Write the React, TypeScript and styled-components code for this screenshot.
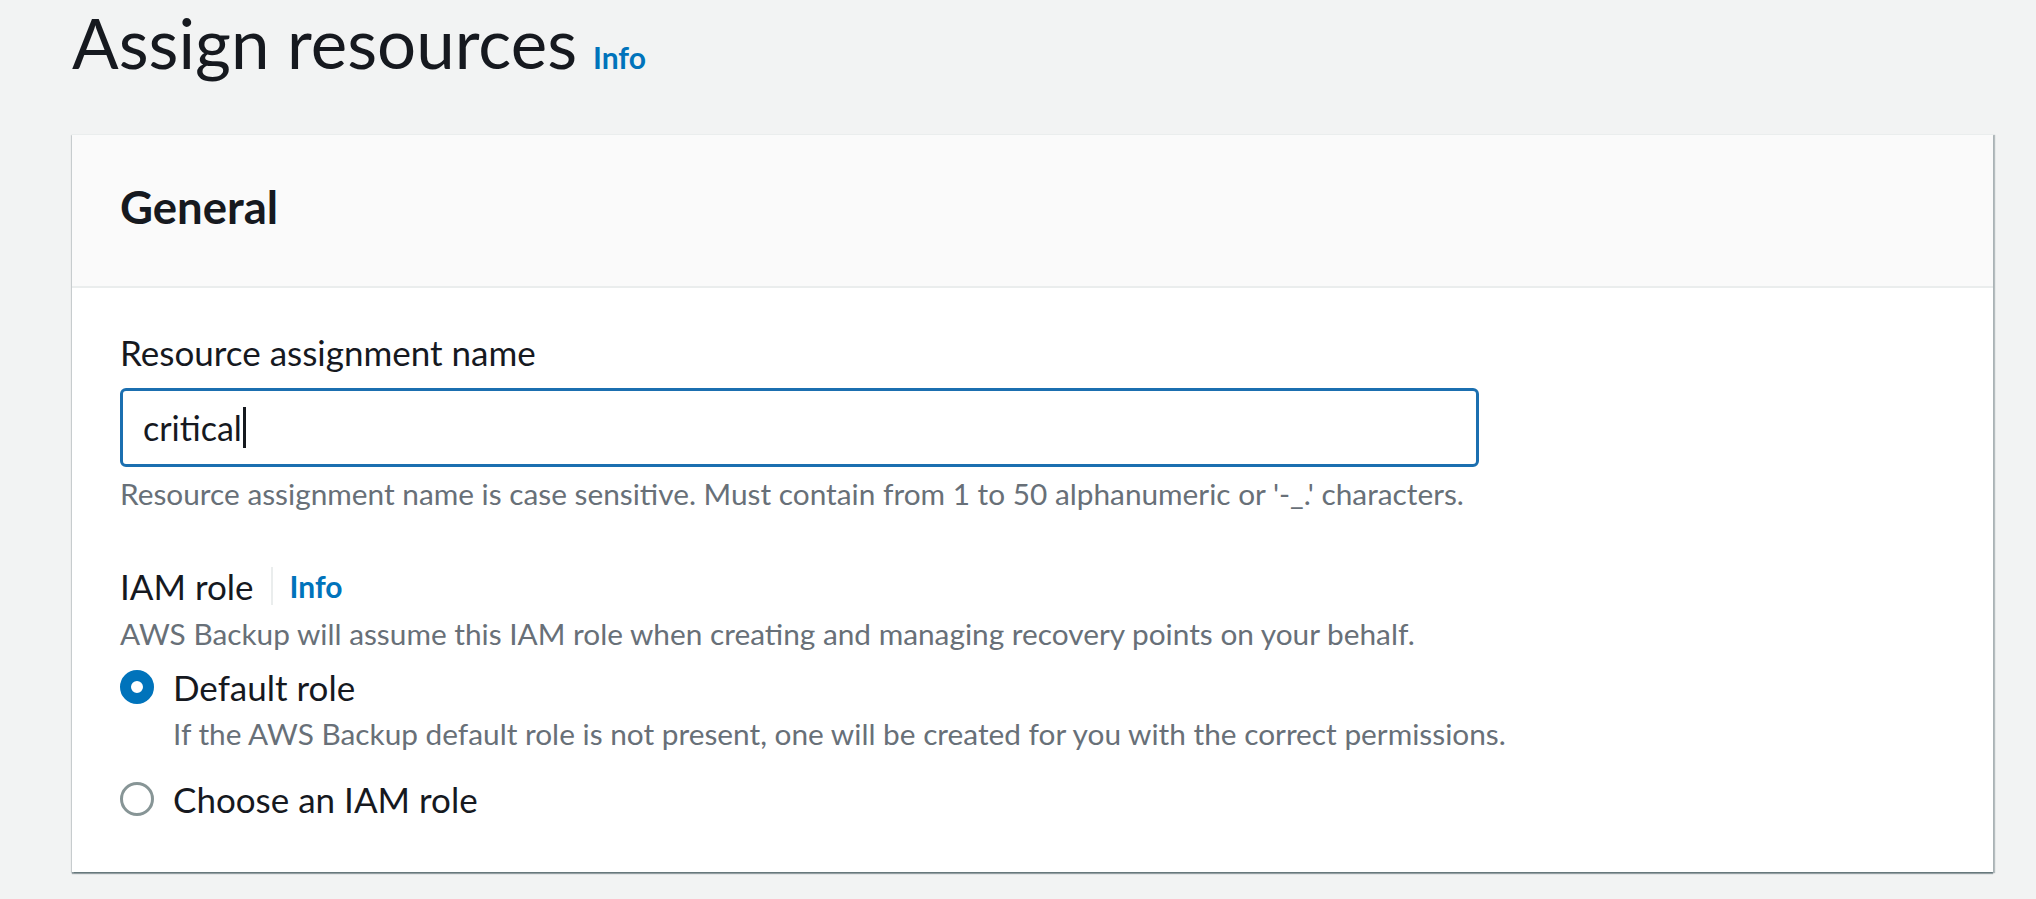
import React from "react";
import styled, { createGlobalStyle } from "styled-components";

const GlobalStyle = createGlobalStyle`
  html, body {
    margin: 0;
    padding: 0;
    background: #f2f3f3;
  }
  body {
    font-family: Lato, "Liberation Sans", sans-serif;
    color: #16191f;
  }
`;

const Page = styled.div`
  padding: 3px 43px 0 72px;
  min-height: 898px;
  box-sizing: border-box;
`;

const PageHeader = styled.div`
  display: flex;
  align-items: baseline;
  gap: 16px;
  height: 80px;
  margin-bottom: 51px;
`;

const Title = styled.h1`
  margin: 0;
  font-size: 69px;
  line-height: 80px;
  font-weight: 400;
  color: #16191f;
`;

const InfoLink = styled.a<{ $size?: number }>`
  font-size: ${(p) => p.$size ?? 30}px;
  font-weight: 700;
  color: #0073bb;
  text-decoration: none;
  cursor: pointer;
`;

const Card = styled.section`
  background: #ffffff;
  border-top: 1px solid #eaeded;
  box-shadow: 0 2px 1px 0 rgba(0, 28, 36, 0.35), 2px 1px 1px 0 rgba(0, 28, 36, 0.25),
    -1px 1px 1px 0 rgba(0, 28, 36, 0.12);
`;

const CardHeader = styled.header`
  background: #fafafa;
  padding: 46px 48px 53px;
  border-bottom: 2px solid #eaeded;
`;

const CardTitle = styled.h2`
  margin: 0;
  font-size: 45.5px;
  line-height: 52px;
  font-weight: 700;
`;

const CardBody = styled.div`
  padding: 43px 48px 52px;
  display: flex;
  flex-direction: column;
`;

const Field = styled.div<{ $gapTop?: number }>`
  display: flex;
  flex-direction: column;
  margin-top: ${(p) => p.$gapTop ?? 0}px;
`;

const LabelRow = styled.div`
  display: flex;
  align-items: center;
  height: 42px;
`;

const Label = styled.label`
  font-size: 35px;
  line-height: 42px;
  color: #16191f;
`;

const Divider = styled.span`
  width: 2px;
  height: 38px;
  background: #eaeded;
  margin: 0 17px;
`;

const TextBox = styled.div`
  margin-top: 15px;
  width: 1359px;
  height: 79px;
  box-sizing: border-box;
  border: 3px solid #1b6fb0;
  border-radius: 6px;
  padding: 0 20px;
  display: flex;
  align-items: center;
  background: #ffffff;
`;

const Value = styled.span`
  font-size: 34px;
  line-height: 42px;
  color: #16191f;
`;

const Caret = styled.span`
  display: inline-block;
  width: 3px;
  height: 41px;
  margin-left: 1px;
  background: #16191f;
`;

const Hint = styled.div<{ $top?: number }>`
  margin-top: ${(p) => p.$top ?? 9}px;
  font-size: 29.8px;
  line-height: 36px;
  color: #687078;
`;

const RadioGroup = styled.div`
  display: flex;
  flex-direction: column;
  margin-top: 14px;
  gap: 26px;
`;

const RadioOption = styled.div`
  display: flex;
  flex-direction: column;
`;

const RadioRow = styled.div`
  display: flex;
  align-items: center;
  gap: 19px;
  height: 42px;
`;

const RadioDot = styled.span<{ $checked?: boolean }>`
  width: 34px;
  height: 34px;
  box-sizing: border-box;
  border-radius: 50%;
  background: #ffffff;
  border: ${(p) => (p.$checked ? "11px solid #0073bb" : "3px solid #879596")};
  flex-shrink: 0;
`;

const RadioDescription = styled.div`
  margin: 8px 0 0 53px;
  font-size: 29.8px;
  line-height: 36px;
  color: #687078;
`;

export default function App() {
  return (
    <>
      <GlobalStyle />
      <Page>
        <PageHeader>
          <Title>Assign resources</Title>
          <InfoLink>Info</InfoLink>
        </PageHeader>

        <Card>
          <CardHeader>
            <CardTitle>General</CardTitle>
          </CardHeader>
          <CardBody>
            <Field>
              <Label>Resource assignment name</Label>
              <TextBox>
                <Value>critical</Value>
                <Caret />
              </TextBox>
              <Hint>
                Resource assignment name is case sensitive. Must contain from 1 to 50 alphanumeric or '-_.' characters.
              </Hint>
            </Field>

            <Field $gapTop={53}>
              <LabelRow>
                <Label>IAM role</Label>
                <Divider />
                <InfoLink>Info</InfoLink>
              </LabelRow>
              <Hint>AWS Backup will assume this IAM role when creating and managing recovery points on your behalf.</Hint>
              <RadioGroup>
                <RadioOption>
                  <RadioRow>
                    <RadioDot $checked />
                    <Label>Default role</Label>
                  </RadioRow>
                  <RadioDescription>
                    If the AWS Backup default role is not present, one will be created for you with the correct permissions.
                  </RadioDescription>
                </RadioOption>
                <RadioOption>
                  <RadioRow>
                    <RadioDot />
                    <Label>Choose an IAM role</Label>
                  </RadioRow>
                </RadioOption>
              </RadioGroup>
            </Field>
          </CardBody>
        </Card>
      </Page>
    </>
  );
}
